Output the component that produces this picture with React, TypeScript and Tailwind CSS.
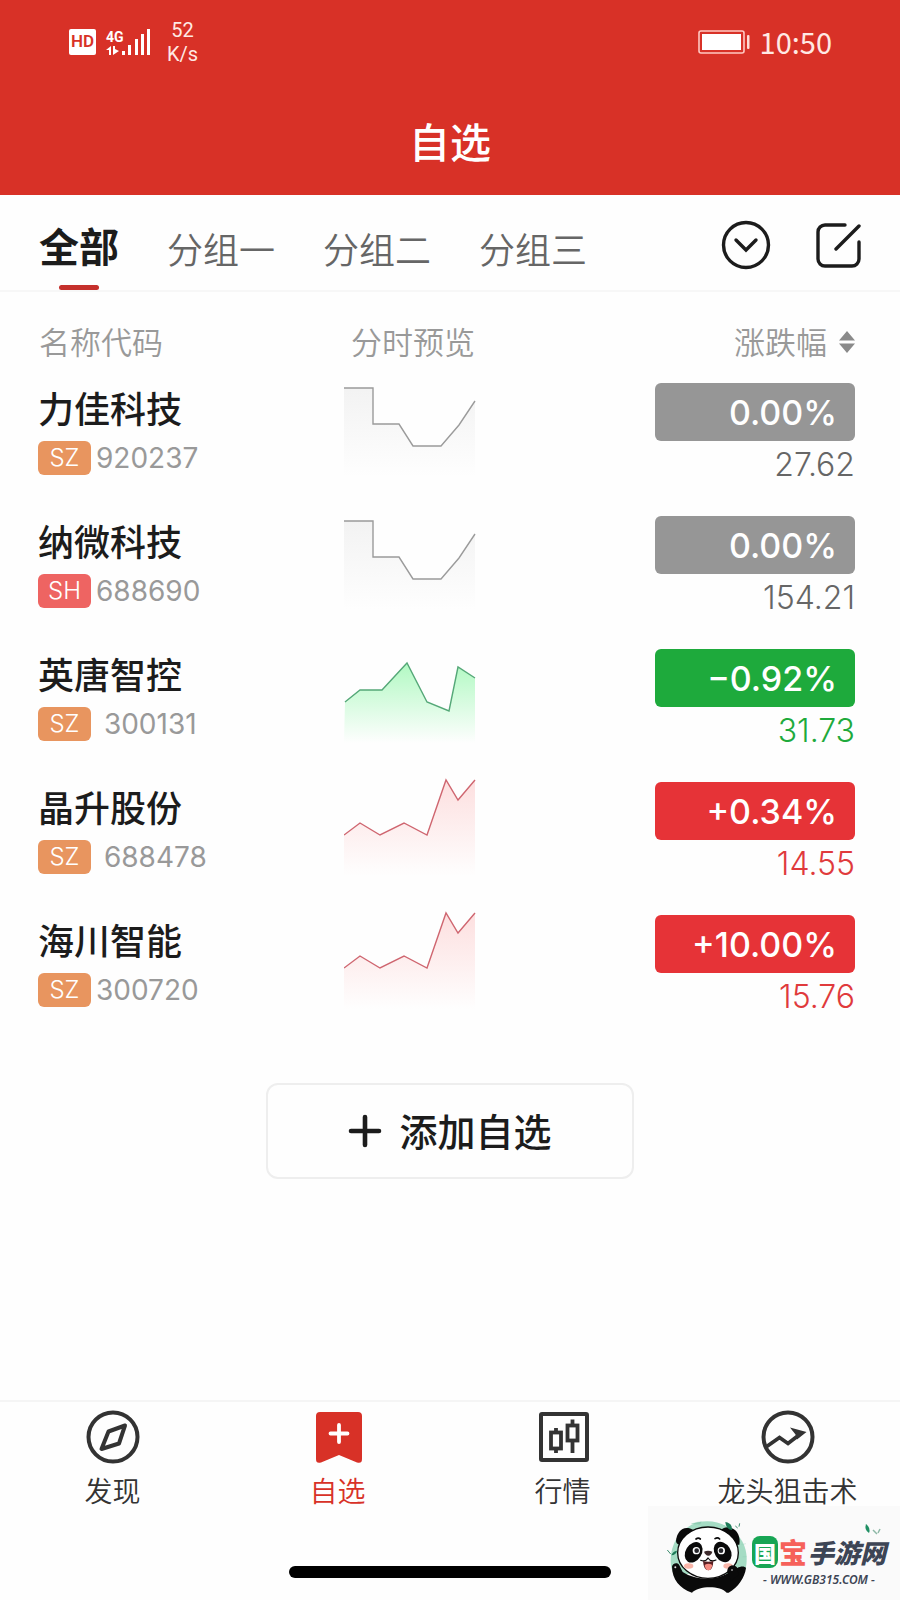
import type { ReactNode } from 'react';

type Trend = 'flat' | 'down' | 'up';

interface Stock {
  name: string;
  market: 'SZ' | 'SH';
  code: string;
  change: string;
  price: string;
  trend: Trend;
}

const STOCKS: Stock[] = [
  { name: '力佳科技', market: 'SZ', code: '920237', change: '0.00%', price: '27.62', trend: 'flat' },
  { name: '纳微科技', market: 'SH', code: '688690', change: '0.00%', price: '154.21', trend: 'flat' },
  { name: '英唐智控', market: 'SZ', code: ' 300131', change: '−0.92%', price: '31.73', trend: 'down' },
  { name: '晶升股份', market: 'SZ', code: ' 688478', change: '+0.34%', price: '14.55', trend: 'up' },
  { name: '海川智能', market: 'SZ', code: '300720', change: '+10.00%', price: '15.76', trend: 'up' },
];

const GROUPS = ['分组一', '分组二', '分组三'];

const TREND_STYLES = {
  flat: {
    badge: 'bg-[#969696]',
    price: 'text-[#666666]',
    stroke: '#9b9b9b',
    fill: '#f2f2f2',
    points: '0,13 29,13 29,49 55,49 69,71 97,71 115,50 131,26',
  },
  down: {
    badge: 'bg-[#1eaa3c]',
    price: 'text-[#1eaa3c]',
    stroke: '#55a878',
    fill: '#a4f8b8',
    points: '1,61 16,49 38,49 63,22 83,61 105,70 114,26 131,37',
  },
  up: {
    badge: 'bg-[#e63337]',
    price: 'text-[#e03a3c]',
    stroke: '#cf6670',
    fill: '#fde0e0',
    points: '0,61 16,49 36,61 60,49 83,61 102,6 114,26 131,6',
  },
};

function Sparkline({ trend, id }: { trend: Trend; id: string }) {
  const { stroke, fill, points } = TREND_STYLES[trend];
  return (
    <svg width="132" height="133" viewBox="0 0 132 133" fill="none" className="block">
      <defs>
        <linearGradient id={id} x1="0" y1="8" x2="0" y2="102" gradientUnits="userSpaceOnUse">
          <stop offset="0" stopColor={fill} />
          <stop offset="1" stopColor={fill} stopOpacity="0" />
        </linearGradient>
      </defs>
      <polygon points={`0,102 ${points} 131,102`} fill={`url(#${id})`} />
      <polyline points={points} stroke={stroke} strokeWidth="1.4" />
    </svg>
  );
}

function StatusBar() {
  return (
    <div className="flex h-[83px] items-center justify-between pl-[69px] pr-[68px]">
      <div className="flex items-center">
        <span className="flex h-[26px] w-[27px] items-center justify-center rounded-xs bg-white font-['Roboto'] text-[17px] font-semibold text-[#d83127]">
          HD
        </span>
        <div className="ml-2.5 flex items-end">
          <div className="flex w-4 flex-col">
            <span className="font-['Roboto'] text-[14px] leading-[15px] font-bold">4G</span>
            <svg width="14" height="11" viewBox="0 0 14 11" fill="#fff">
              <path d="M0 5 5 1v9H3V5zM7 1h2v3l4 2-6 4z" />
            </svg>
          </div>
          <svg width="29" height="28" viewBox="0 0 29 28" fill="#fff">
            <rect x="0" y="23" width="3" height="4" />
            <rect x="6" y="17" width="3" height="10" />
            <rect x="13" y="11" width="3" height="16" />
            <rect x="19" y="6" width="3" height="21" />
            <rect x="25" y="1" width="3" height="26" />
          </svg>
        </div>
        <div className="ml-4 text-center font-['Roboto'] text-[20px] leading-6 text-[#ffe9e4]">
          52
          <br />
          K/s
        </div>
      </div>
      <div className="flex items-center gap-2.5">
        <svg width="52" height="24" viewBox="0 0 52 24" fill="none">
          <rect x="1" y="1" width="45" height="22" rx="2" stroke="#ffc9c2" strokeWidth="1.6" />
          <rect x="4" y="4" width="39" height="16" fill="#fff" />
          <rect x="49" y="5" width="2.5" height="14" rx="1" fill="#ffd9d3" />
        </svg>
        <span className="pb-0.5 text-[29px] leading-8 text-[#ffe9e4]">10:50</span>
      </div>
    </div>
  );
}

function NavItem({ label, active, children }: { label: string; active?: boolean; children: ReactNode }) {
  return (
    <a href="#" className={`flex flex-col items-center pt-2 ${active ? 'text-[#d83127]' : 'text-[#333333]'}`}>
      <svg width="54" height="54" viewBox="0 0 54 54" fill="none" stroke="currentColor" strokeWidth="4">
        {children}
      </svg>
      <span className="mt-2 text-[28px] leading-9 font-[350]">{label}</span>
    </a>
  );
}

function Panda() {
  return (
    <svg width="88" height="86" viewBox="0 0 264 258">
      <path d="M20 140C20 70 70 22 130 22s118 46 118 112c0 24-4 34-10 46H30c-8-14-10-26-10-40z" fill="#a5dcc4" />
      <path d="M82 30q16-6 30-7l-4 8zM232 92l14-3M236 128h12" fill="#8fcdb2" stroke="#8fcdb2" />
      {/* ears */}
      <path d="M36 80c2-20 14-38 32-38 12 0 22 6 24 12L48 92q-12-2-12-12z" fill="#0a0a0a" />
      <path d="M172 48c6-8 18-10 30-6 18 6 28 26 24 50l-10 0z" fill="#0a0a0a" />
      {/* arms and body */}
      <path d="M24 158c0-8 16-16 22-4l10 20c40 26 100 26 136 4l-4-12c0-16 26-16 32-4 10-6 22-6 26 0-4 30-24 58-52 74H84C48 224 24 196 24 158z" fill="#0a0a0a" />
      <path d="M84 236c16-20 84-24 104 0-30 16-76 16-104 0z" fill="#fafafa" />
      {/* face */}
      <ellipse cx="132" cy="116" rx="91" ry="77" fill="#fff" stroke="#0a0a0a" strokeWidth="4" />
      <ellipse cx="89" cy="115" rx="24" ry="33" fill="#0a0a0a" transform="rotate(32 89 115)" />
      <ellipse cx="176" cy="114" rx="24" ry="33" fill="#0a0a0a" transform="rotate(-32 176 114)" />
      <circle cx="97" cy="110" r="11" fill="#fff" />
      <circle cx="98" cy="110" r="7" fill="#26262b" />
      <circle cx="172" cy="110" r="11" fill="#fff" />
      <circle cx="171" cy="110" r="7" fill="#26262b" />
      <path d="M96 75q7-5 13 0M153 74q8-5 14 1" stroke="#0a0a0a" strokeWidth="5" fill="none" strokeLinecap="round" />
      <path d="M120 113q12-6 25 0-3 11-12 12-9-1-13-12z" fill="#3d2a2c" />
      <path d="M110 139q14 6 22-7 8 13 24 6" stroke="#0a0a0a" strokeWidth="3.5" fill="none" strokeLinecap="round" />
      <path d="M117 141q15 4 31 0-1 28-15 28t-16-28z" fill="#5a2023" />
      <path d="M122 153q11-7 23 0-3 16-12 16t-11-16z" fill="#f58a80" />
      <ellipse cx="74" cy="156" rx="14" ry="8" fill="#f9b5a8" />
      <ellipse cx="192" cy="156" rx="14" ry="8" fill="#f9b5a8" />
      <path d="M190 176q-2-18 14-22 12 2 16 12l4 16-22 18z" fill="#0a0a0a" />
      <circle cx="34" cy="160" r="3" fill="#ddd" />
      <circle cx="204" cy="168" r="3" fill="#999" />
      {/* leaves */}
      <path d="M184 24q22 4 20 24-18-2-20-24zM22 124q4-12 17-14-3 13-17 14z" fill="#1c7a57" />
      <path d="M10 108l10 12M214 36l7 6M225 38l2-10" stroke="#3c8d6e" strokeWidth="3" />
    </svg>
  );
}

function SiteMark() {
  return (
    <a href="#" className="absolute right-0 bottom-0 flex h-[94px] w-[252px] items-end bg-[#fafafa] pl-4">
      <Panda />
      <div className="flex flex-col pb-3">
        <svg width="18" height="12" viewBox="0 0 18 12" className="mr-1 self-end">
          <path d="M2 0q5 4 3 9Q0 6 2 0z" fill="#1f8f63" />
          <path d="m9 6 4 4M14 9l2-4" stroke="#8db8a6" strokeWidth="1.5" />
        </svg>
        <div className="flex items-center gap-px leading-8 font-black whitespace-nowrap">
          <span className="flex h-8 w-[26px] items-center justify-center rounded-lg bg-[#17a554] text-[22px] text-white">国</span>
          <span className="text-[28px] text-[#f6615a]">宝</span>
          <span className="text-[26px] text-[#3d4555] italic">手游网</span>
        </div>
        <span className="mt-1 text-center font-['Noto_Sans'] text-[12px] leading-4 font-semibold text-[#3d4555] italic">
          - WWW.GB315.COM -
        </span>
      </div>
    </a>
  );
}

export default function App() {
  return (
    <div className="relative flex min-h-screen flex-col bg-[#fefefe] font-['Noto_Sans_CJK_SC',sans-serif]">
      <header className="bg-[#d83127] text-white">
        <StatusBar />
        <h1 className="flex h-28 items-center justify-center pt-0.5 text-[41px] leading-12 font-medium">自选</h1>
      </header>

      <div className="flex h-[97px] items-stretch border-b-2 border-[#f7f7f7] pr-[38px] pl-[39px]">
        <div className="flex items-stretch gap-12">
          <button className="flex flex-col items-center justify-end text-[40px] leading-12 font-bold text-[#1c1c1c]">
            全部
            <span className="mt-4 h-[5px] w-10 rounded-full bg-[#c5302c]" />
          </button>
          {GROUPS.map(g => (
            <button key={g} className="pt-2.5 text-[36px] font-[350] text-[#666666]">{g}</button>
          ))}
        </div>
        <div className="ml-auto flex items-center gap-[45px] pt-1">
          <button aria-label="展开">
            <svg width="50" height="50" viewBox="0 0 50 50" fill="none" stroke="#1c1c1c" strokeWidth="3.4" strokeLinecap="round">
              <circle cx="25" cy="25" r="22.5" />
              <path d="m15 20 10 10 10-10" />
            </svg>
          </button>
          <button aria-label="编辑">
            <svg width="46" height="46" viewBox="0 0 46 46" fill="none" stroke="#1c1c1c" strokeWidth="3.4" strokeLinecap="round">
              <path d="M29 3H9a7 7 0 0 0-7 7v27a7 7 0 0 0 7 7h27a7 7 0 0 0 7-7V20M20 27 43 4" />
            </svg>
          </button>
        </div>
      </div>

      <table className="w-full">
        <thead>
          <tr className="h-[83px] text-[31px] text-[#999999]">
            <th className="w-[344px] pt-4 pl-[39px] text-left font-[350]">名称代码</th>
            <th className="pt-4 pl-[7px] text-left font-[350]">分时预览</th>
            <th className="pt-4 pr-[45px] font-[350]">
              <button className="ml-auto flex items-center gap-3">
                涨跌幅
                <svg width="16" height="22" viewBox="0 0 16 22" fill="#8a8a8a">
                  <path d="m8 0 8 9.500H0zM8 22l-8-9.500h16z" />
                </svg>
              </button>
            </th>
          </tr>
        </thead>
        <tbody>
          {STOCKS.map(s => (
            <tr key={s.code} className="h-[133px] align-top">
              <td className="pt-1.5 pl-[38px]">
                <div className="text-[36px] leading-13 font-medium text-[#1c1c1c]">{s.name}</div>
                <div className="mt-2 flex items-center gap-[5px] font-['Inter']">
                  <span className={`flex h-[34px] w-[53px] items-center justify-center rounded-md text-[24px] font-light text-white ${s.market === 'SZ' ? 'bg-[#e8955f]' : 'bg-[#ee6462]'}`}>
                    {s.market}
                  </span>
                  <span className="text-[28px] leading-8 whitespace-pre text-[#999999]">{s.code}</span>
                </div>
              </td>
              <td>
                <Sparkline trend={s.trend} id={`area-${s.code.trim()}`} />
              </td>
              <td className="pt-2 pr-[45px] font-['Inter']">
                <div className={`ml-auto flex h-[58px] w-50 items-center justify-end rounded-md pr-[18px] text-[34px] font-medium text-white ${TREND_STYLES[s.trend].badge}`}>
                  {s.change}
                </div>
                <div className={`mt-1 text-right text-[32px] leading-10 font-[350] ${TREND_STYLES[s.trend].price}`}>{s.price}</div>
              </td>
            </tr>
          ))}
        </tbody>
      </table>

      <button className="mx-auto mt-[43px] flex h-24 w-[368px] items-center justify-center gap-[17px] rounded-xl border-2 border-[#eeeeee] pb-1 text-[38px] font-medium text-[#1c1c1c]">
        <svg width="34" height="34" viewBox="0 0 34 34" stroke="currentColor" strokeWidth="4.6" strokeLinecap="round" className="mt-1">
          <path d="M17 3v28M3 17h28" />
        </svg>
        添加自选
      </button>

      <footer className="mt-auto border-t-2 border-[#f5f5f5]">
        <nav className="grid grid-cols-4">
          <NavItem label="发现">
            <circle cx="27" cy="27" r="24.5" />
            <path d="m39 15.500-16.500 6-7 17.500L33 33.500z" strokeLinejoin="round" />
          </NavItem>
          <NavItem label="自选" active>
            <path d="M9 2h38q4 0 4 4v43q0 5-5 3.500L28 45 10 52.500Q5 54 5 49V6q0-4 4-4z" fill="currentColor" stroke="none" />
            <path d="M28 15v17M19.500 23.500h17" stroke="#fff" strokeWidth="3.8" strokeLinecap="round" />
          </NavItem>
          <NavItem label="行情">
            <rect x="5" y="4" width="46" height="46" rx="1" />
            <g strokeWidth="3.8">
              <rect x="15" y="22.5" width="10" height="16" />
              <path d="M20 18v4M20 39v4" />
              <rect x="31.5" y="15.5" width="10" height="15" />
              <path d="M36.500 9.500V15M36.500 31v12" />
            </g>
          </NavItem>
          <NavItem label="龙头狙击术">
            <circle cx="27" cy="27" r="24.5" />
            <path d="M5 37 18.500 27.500 27 33.500 38 25" strokeWidth="3.8" />
            <path d="m29 17.500 16.500 4.500L36 29.500l-1.500-5z" fill="currentColor" stroke="none" />
          </NavItem>
        </nav>
        <div className="flex h-[92px] items-end justify-center pb-[22px]">
          <div className="h-3 w-[322px] rounded-full bg-black" />
        </div>
      </footer>

      <SiteMark />
    </div>
  );
}
